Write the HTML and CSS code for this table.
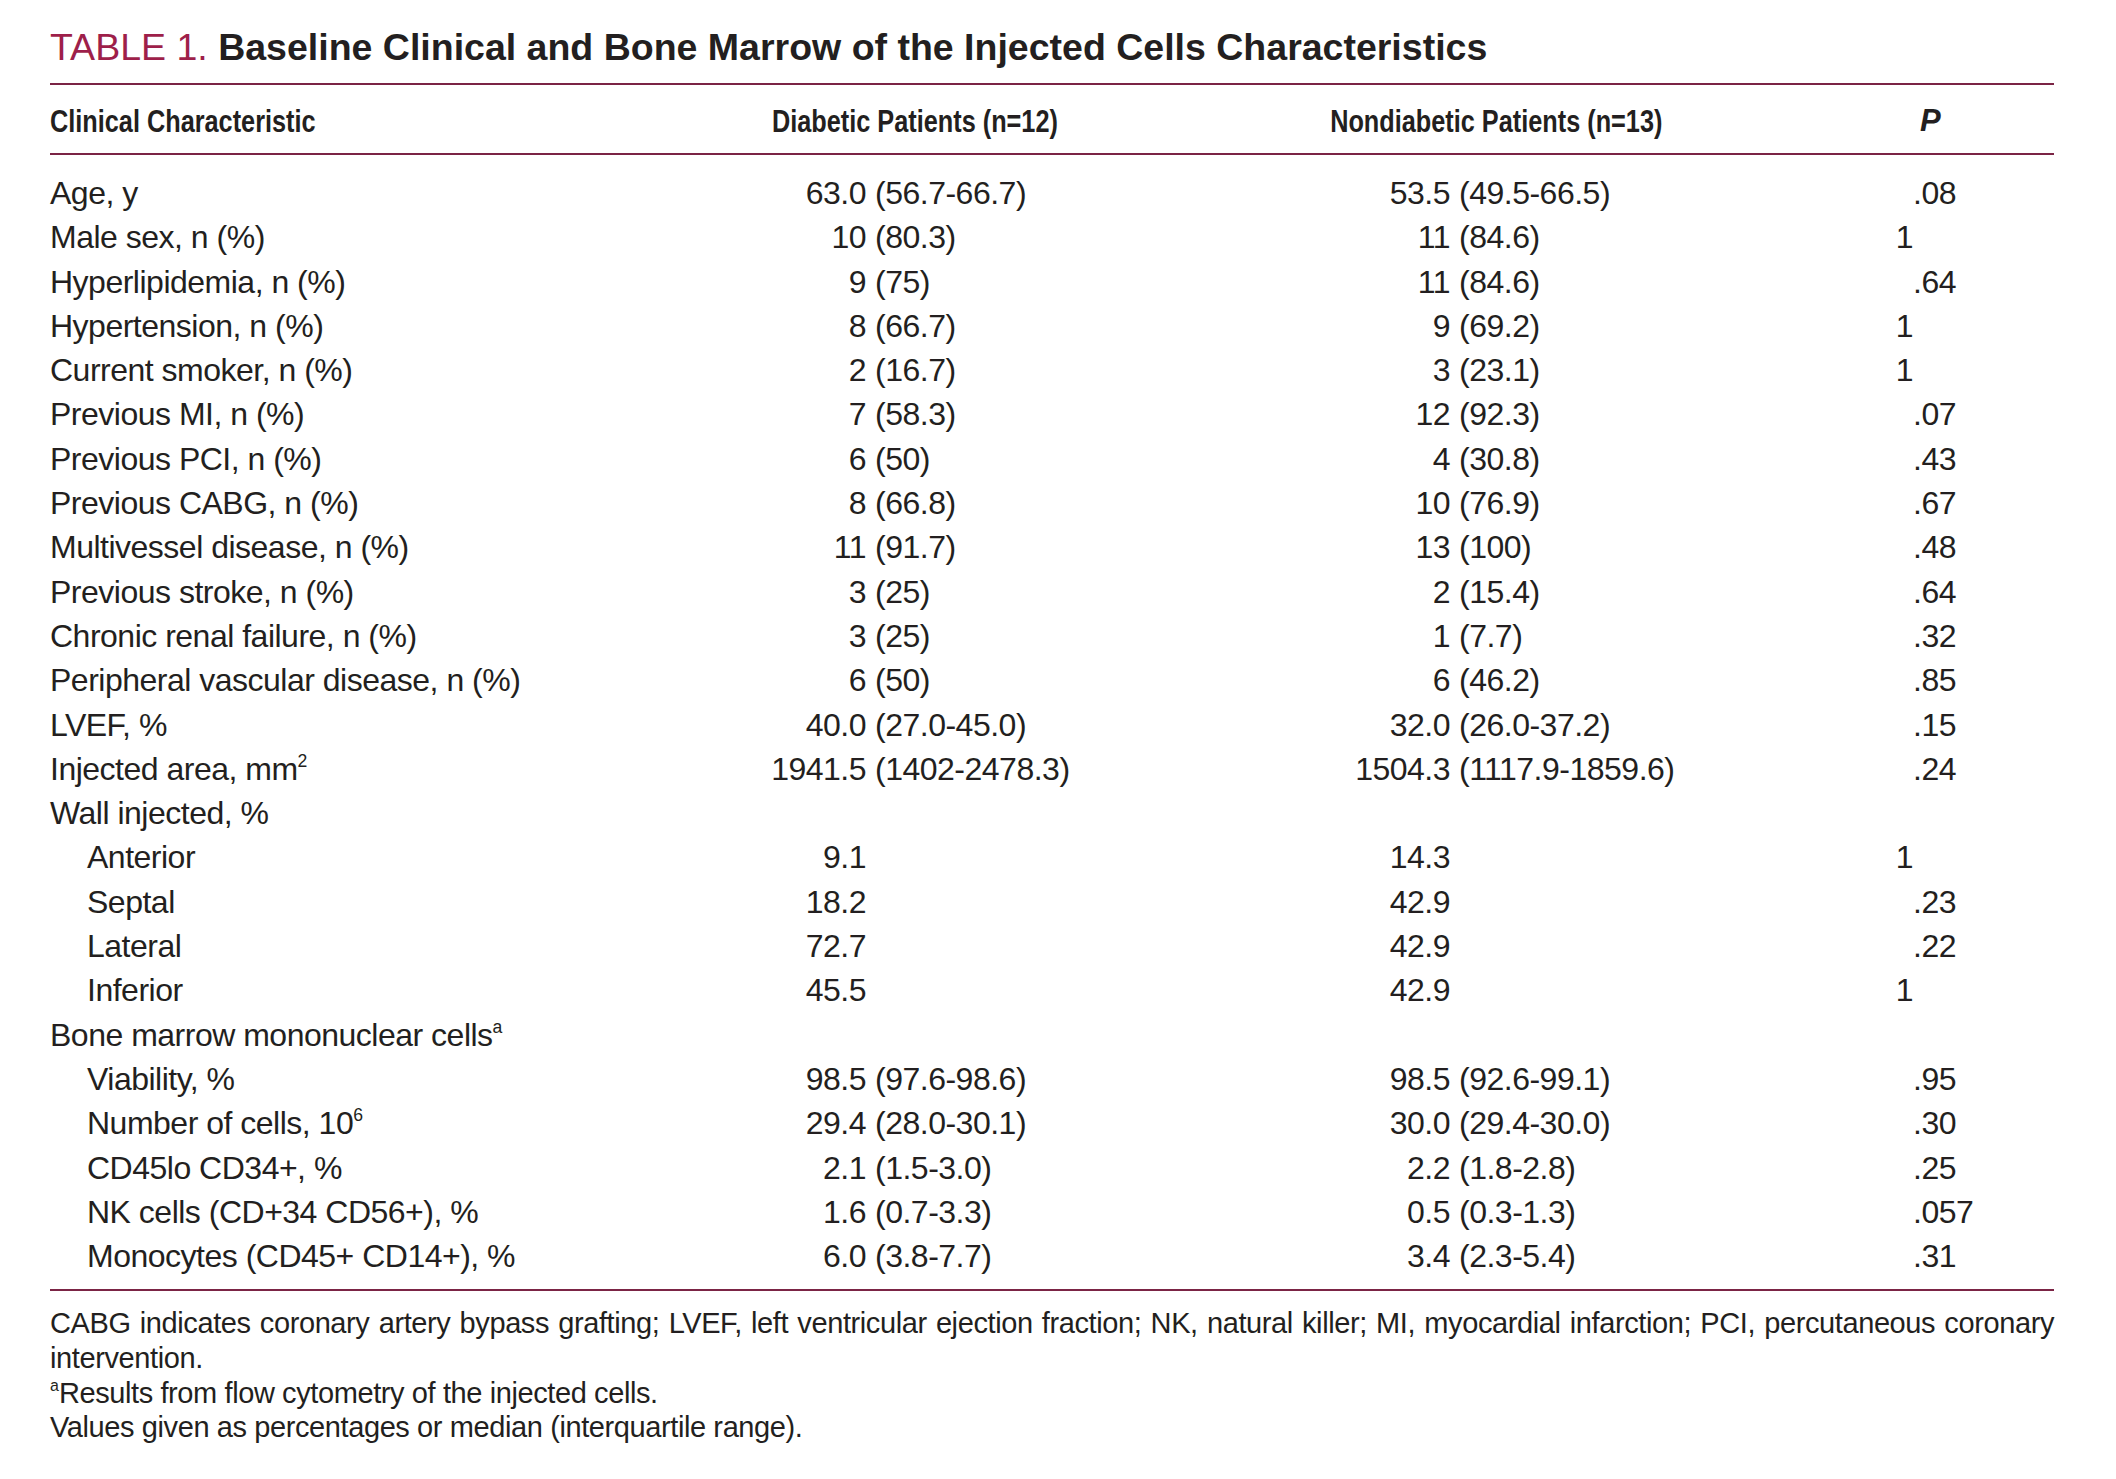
FILE: index.html
```html
<!DOCTYPE html>
<html lang="en">
<head>
<meta charset="utf-8">
<title>Table 1</title>
<link rel="stylesheet" href="styles.css">
</head>
<body>
<div class="page">
  <h1 class="title"><span class="label">TABLE 1.</span> <span class="caption">Baseline Clinical and Bone Marrow of the Injected Cells Characteristics</span></h1>
  <div class="rule"></div>
  <div class="head">
    <div class="h-first"><span>Clinical Characteristic</span></div>
    <div class="h-mid"><span>Diabetic Patients (n=12)</span></div>
    <div class="h-mid"><span>Nondiabetic Patients (n=13)</span></div>
    <div class="h-p">P</div>
  </div>
  <div class="rule"></div>
  <div class="body">
    <div class="row"><div class="lab">Age, y</div><div class="num">63.0</div><div class="par">(56.7-66.7)</div><div class="num">53.5</div><div class="par">(49.5-66.5)</div><div class="pi"></div><div class="pf">.08</div></div>
    <div class="row"><div class="lab">Male sex, n (%)</div><div class="num">10</div><div class="par">(80.3)</div><div class="num">11</div><div class="par">(84.6)</div><div class="pi">1</div><div class="pf"></div></div>
    <div class="row"><div class="lab">Hyperlipidemia, n (%)</div><div class="num">9</div><div class="par">(75)</div><div class="num">11</div><div class="par">(84.6)</div><div class="pi"></div><div class="pf">.64</div></div>
    <div class="row"><div class="lab">Hypertension, n (%)</div><div class="num">8</div><div class="par">(66.7)</div><div class="num">9</div><div class="par">(69.2)</div><div class="pi">1</div><div class="pf"></div></div>
    <div class="row"><div class="lab">Current smoker, n (%)</div><div class="num">2</div><div class="par">(16.7)</div><div class="num">3</div><div class="par">(23.1)</div><div class="pi">1</div><div class="pf"></div></div>
    <div class="row"><div class="lab">Previous MI, n (%)</div><div class="num">7</div><div class="par">(58.3)</div><div class="num">12</div><div class="par">(92.3)</div><div class="pi"></div><div class="pf">.07</div></div>
    <div class="row"><div class="lab">Previous PCI, n (%)</div><div class="num">6</div><div class="par">(50)</div><div class="num">4</div><div class="par">(30.8)</div><div class="pi"></div><div class="pf">.43</div></div>
    <div class="row"><div class="lab">Previous CABG, n (%)</div><div class="num">8</div><div class="par">(66.8)</div><div class="num">10</div><div class="par">(76.9)</div><div class="pi"></div><div class="pf">.67</div></div>
    <div class="row"><div class="lab">Multivessel disease, n (%)</div><div class="num">11</div><div class="par">(91.7)</div><div class="num">13</div><div class="par">(100)</div><div class="pi"></div><div class="pf">.48</div></div>
    <div class="row"><div class="lab">Previous stroke, n (%)</div><div class="num">3</div><div class="par">(25)</div><div class="num">2</div><div class="par">(15.4)</div><div class="pi"></div><div class="pf">.64</div></div>
    <div class="row"><div class="lab">Chronic renal failure, n (%)</div><div class="num">3</div><div class="par">(25)</div><div class="num">1</div><div class="par">(7.7)</div><div class="pi"></div><div class="pf">.32</div></div>
    <div class="row"><div class="lab">Peripheral vascular disease, n (%)</div><div class="num">6</div><div class="par">(50)</div><div class="num">6</div><div class="par">(46.2)</div><div class="pi"></div><div class="pf">.85</div></div>
    <div class="row"><div class="lab">LVEF, %</div><div class="num">40.0</div><div class="par">(27.0-45.0)</div><div class="num">32.0</div><div class="par">(26.0-37.2)</div><div class="pi"></div><div class="pf">.15</div></div>
    <div class="row"><div class="lab">Injected area, mm<sup>2</sup></div><div class="num">1941.5</div><div class="par">(1402-2478.3)</div><div class="num">1504.3</div><div class="par">(1117.9-1859.6)</div><div class="pi"></div><div class="pf">.24</div></div>
    <div class="row"><div class="lab">Wall injected, %</div><div class="num"></div><div class="par"></div><div class="num"></div><div class="par"></div><div class="pi"></div><div class="pf"></div></div>
    <div class="row"><div class="lab sub">Anterior</div><div class="num">9.1</div><div class="par"></div><div class="num">14.3</div><div class="par"></div><div class="pi">1</div><div class="pf"></div></div>
    <div class="row"><div class="lab sub">Septal</div><div class="num">18.2</div><div class="par"></div><div class="num">42.9</div><div class="par"></div><div class="pi"></div><div class="pf">.23</div></div>
    <div class="row"><div class="lab sub">Lateral</div><div class="num">72.7</div><div class="par"></div><div class="num">42.9</div><div class="par"></div><div class="pi"></div><div class="pf">.22</div></div>
    <div class="row"><div class="lab sub">Inferior</div><div class="num">45.5</div><div class="par"></div><div class="num">42.9</div><div class="par"></div><div class="pi">1</div><div class="pf"></div></div>
    <div class="row"><div class="lab">Bone marrow mononuclear cells<sup>a</sup></div><div class="num"></div><div class="par"></div><div class="num"></div><div class="par"></div><div class="pi"></div><div class="pf"></div></div>
    <div class="row"><div class="lab sub">Viability, %</div><div class="num">98.5</div><div class="par">(97.6-98.6)</div><div class="num">98.5</div><div class="par">(92.6-99.1)</div><div class="pi"></div><div class="pf">.95</div></div>
    <div class="row"><div class="lab sub">Number of cells, 10<sup>6</sup></div><div class="num">29.4</div><div class="par">(28.0-30.1)</div><div class="num">30.0</div><div class="par">(29.4-30.0)</div><div class="pi"></div><div class="pf">.30</div></div>
    <div class="row"><div class="lab sub">CD45lo CD34+, %</div><div class="num">2.1</div><div class="par">(1.5-3.0)</div><div class="num">2.2</div><div class="par">(1.8-2.8)</div><div class="pi"></div><div class="pf">.25</div></div>
    <div class="row"><div class="lab sub">NK cells (CD+34 CD56+), %</div><div class="num">1.6</div><div class="par">(0.7-3.3)</div><div class="num">0.5</div><div class="par">(0.3-1.3)</div><div class="pi"></div><div class="pf">.057</div></div>
    <div class="row"><div class="lab sub">Monocytes (CD45+ CD14+), %</div><div class="num">6.0</div><div class="par">(3.8-7.7)</div><div class="num">3.4</div><div class="par">(2.3-5.4)</div><div class="pi"></div><div class="pf">.31</div></div>
  </div>
  <div class="rule"></div>
  <div class="notes">
    <p class="just">CABG indicates coronary artery bypass grafting; LVEF, left ventricular ejection fraction; NK, natural killer; MI, myocardial infarction; PCI, percutaneous coronary</p>
    <p>intervention.</p>
    <p><sup>a</sup>Results from flow cytometry of the injected cells.</p>
    <p>Values given as percentages or median (interquartile range).</p>
  </div>
</div>
</body>
</html>
```
FILE: styles.css
```css
html, body {
  margin: 0;
  padding: 0;
  background: #ffffff;
}
.page {
  width: 2004px;
  padding: 25px 0 0 50px;
  color: #231f20;
  font-family: "Liberation Sans", Arial, sans-serif;
}
.title {
  margin: 0;
  font-size: 37.5px;
  line-height: 44px;
  font-weight: normal;
  white-space: nowrap;
}
.title .label {
  color: #9e1f4a;
}
.title .caption {
  font-weight: bold;
  color: #231f20;
}
.rule {
  height: 2px;
  background: #7b2445;
}
.title + .rule {
  margin-top: 14px;
}
.head {
  display: grid;
  grid-template-columns: 650px 430px 732px 192px;
  padding: 14px 0 10px;
  font-weight: bold;
  font-size: 32px;
  line-height: 44px;
  white-space: nowrap;
}
.head span {
  display: inline-block;
  transform: scaleX(0.79);
  transform-origin: left center;
}
.head .h-mid {
  text-align: center;
}
.head .h-mid span {
  transform-origin: center center;
}
.head .h-p {
  padding-left: 58px;
  font-style: italic;
  font-size: 31px;
}
.body {
  padding: 16px 0 11px;
  font-size: 32px;
  letter-spacing: -0.5px;
}
.row {
  display: grid;
  grid-template-columns: 650px 166px 434px 150px 410px 53px 141px;
  height: 44.3px;
  line-height: 44.3px;
  white-space: nowrap;
}
.row .num {
  text-align: right;
}
.row .par {
  padding-left: 9px;
}
.row .pi {
  text-align: right;
}
.row .sub {
  padding-left: 37px;
}
sup {
  font-size: 0.55em;
  line-height: 0;
  vertical-align: 0.75em;
  letter-spacing: 0;
}
.notes {
  padding-top: 15px;
  font-size: 29px;
  line-height: 34.6px;
  letter-spacing: -0.4px;
}
.notes p {
  margin: 0;
}
.notes .just {
  text-align: justify;
  text-align-last: justify;
}
```
